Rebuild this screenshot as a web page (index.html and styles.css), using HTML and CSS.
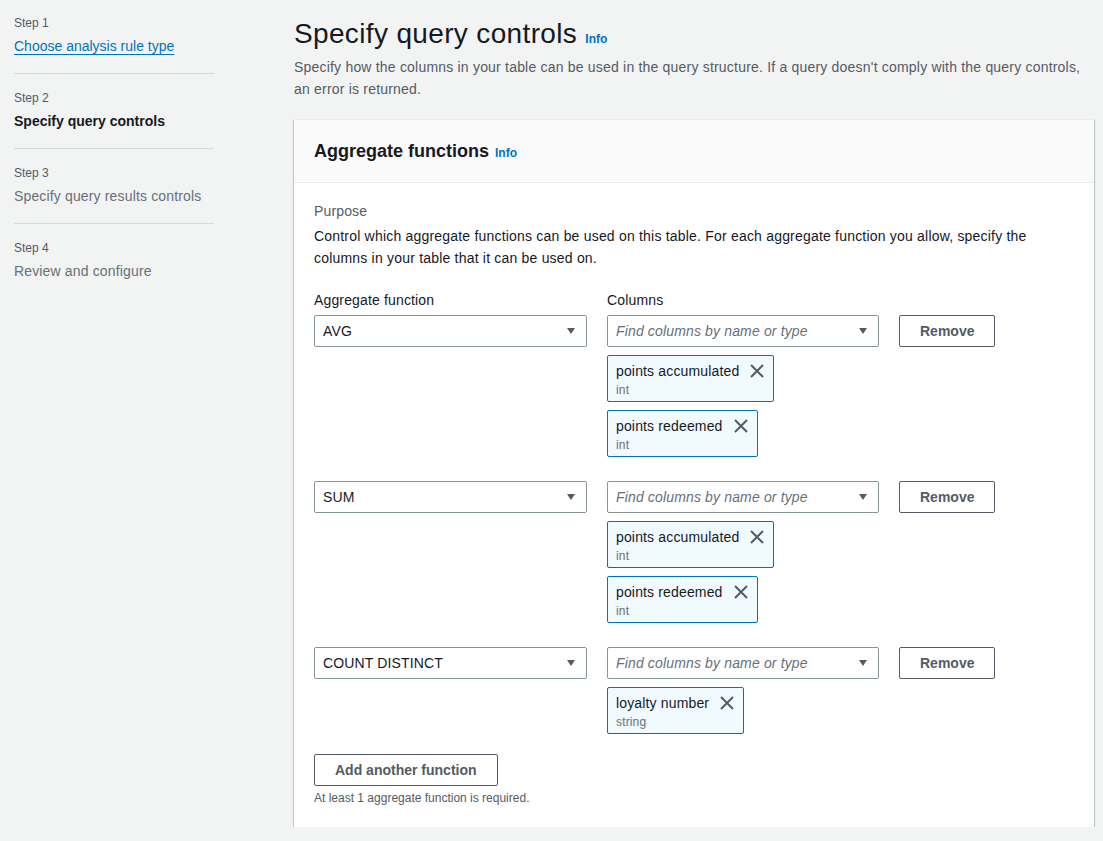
FILE: index.html
```html
<!DOCTYPE html>
<html lang="en">
<head>
<meta charset="utf-8">
<title>Specify query controls</title>
<link rel="stylesheet" href="styles.css">
</head>
<body>
<div class="page">
  <nav class="steps">
    <div class="step step-first">
      <div class="step-label">Step 1</div>
      <a class="step-title step-link" href="#">Choose analysis rule type</a>
    </div>
    <div class="step">
      <div class="step-label">Step 2</div>
      <div class="step-title step-current">Specify query controls</div>
    </div>
    <div class="step">
      <div class="step-label">Step 3</div>
      <div class="step-title step-disabled">Specify query results controls</div>
    </div>
    <div class="step step-last">
      <div class="step-label">Step 4</div>
      <div class="step-title step-disabled">Review and configure</div>
    </div>
  </nav>

  <main class="main">
    <h1 class="page-title">Specify query controls <a class="info" href="#">Info</a></h1>
    <p class="page-desc">Specify how the columns in your table can be used in the query structure. If a query doesn't comply with the query controls, an error is returned.</p>

    <section class="container">
      <header class="container-header">
        <h2 class="container-title">Aggregate functions <a class="info" href="#">Info</a></h2>
      </header>
      <div class="container-body">
        <div class="purpose-label">Purpose</div>
        <p class="purpose-desc">Control which aggregate functions can be used on this table. For each aggregate function you allow, specify the columns in your table that it can be used on.</p>

        <div class="grid labels">
          <div class="field-label">Aggregate function</div>
          <div class="field-label">Columns</div>
        </div>

        <div class="rows">
          <div class="grid row">
            <div class="select">
              <span class="select-value">AVG</span>
              <svg class="caret" viewBox="0 0 16 16" width="16" height="16"><path d="M4 5h8l-4 6z"/></svg>
            </div>
            <div class="col-cell">
              <div class="select">
                <span class="placeholder">Find columns by name or type</span>
                <svg class="caret" viewBox="0 0 16 16" width="16" height="16"><path d="M4 5h8l-4 6z"/></svg>
              </div>
              <div class="token">
                <div class="token-text"><div class="token-name">points accumulated</div><div class="token-tag">int</div></div>
                <svg class="dismiss" viewBox="0 0 16 16" width="16" height="16"><path d="M2 2l12 12M14 2L2 14"/></svg>
              </div>
              <div class="token">
                <div class="token-text"><div class="token-name">points redeemed</div><div class="token-tag">int</div></div>
                <svg class="dismiss" viewBox="0 0 16 16" width="16" height="16"><path d="M2 2l12 12M14 2L2 14"/></svg>
              </div>
            </div>
            <button class="btn">Remove</button>
          </div>

          <div class="grid row">
            <div class="select">
              <span class="select-value">SUM</span>
              <svg class="caret" viewBox="0 0 16 16" width="16" height="16"><path d="M4 5h8l-4 6z"/></svg>
            </div>
            <div class="col-cell">
              <div class="select">
                <span class="placeholder">Find columns by name or type</span>
                <svg class="caret" viewBox="0 0 16 16" width="16" height="16"><path d="M4 5h8l-4 6z"/></svg>
              </div>
              <div class="token">
                <div class="token-text"><div class="token-name">points accumulated</div><div class="token-tag">int</div></div>
                <svg class="dismiss" viewBox="0 0 16 16" width="16" height="16"><path d="M2 2l12 12M14 2L2 14"/></svg>
              </div>
              <div class="token">
                <div class="token-text"><div class="token-name">points redeemed</div><div class="token-tag">int</div></div>
                <svg class="dismiss" viewBox="0 0 16 16" width="16" height="16"><path d="M2 2l12 12M14 2L2 14"/></svg>
              </div>
            </div>
            <button class="btn">Remove</button>
          </div>

          <div class="grid row">
            <div class="select">
              <span class="select-value">COUNT DISTINCT</span>
              <svg class="caret" viewBox="0 0 16 16" width="16" height="16"><path d="M4 5h8l-4 6z"/></svg>
            </div>
            <div class="col-cell">
              <div class="select">
                <span class="placeholder">Find columns by name or type</span>
                <svg class="caret" viewBox="0 0 16 16" width="16" height="16"><path d="M4 5h8l-4 6z"/></svg>
              </div>
              <div class="token">
                <div class="token-text"><div class="token-name">loyalty number</div><div class="token-tag">string</div></div>
                <svg class="dismiss" viewBox="0 0 16 16" width="16" height="16"><path d="M2 2l12 12M14 2L2 14"/></svg>
              </div>
            </div>
            <button class="btn">Remove</button>
          </div>
        </div>

        <button class="btn btn-add">Add another function</button>
        <div class="hint">At least 1 aggregate function is required.</div>
      </div>
    </section>
  </main>
</div>
</body>
</html>
```

FILE: styles.css
```css
* { box-sizing: border-box; }

html, body {
  margin: 0;
  padding: 0;
  background: #f2f3f3;
}

body {
  font-family: "Liberation Sans", Arial, sans-serif;
  font-size: 14px;
  line-height: 22px;
  letter-spacing: 0.15px;
  color: #16191f;
}

.page {
  display: flex;
  padding: 0 9px 0 14px;
}

/* Steps nav */
.steps {
  width: 200px;
  flex: none;
}

.step {
  padding: 16px 0;
  border-bottom: 1px solid #d5dbdb;
  display: flex;
  flex-direction: column;
  align-items: flex-start;
}

.step-first { padding-top: 15px; }
.step-last { border-bottom: none; }

.step-label {
  font-size: 12px;
  line-height: 16px;
  color: #545b64;
  margin-bottom: 4px;
  letter-spacing: 0;
}

.step-title {
  font-size: 14px;
  line-height: 22px;
}

.step-link {
  color: #0073bb;
  text-decoration: underline;
  text-underline-offset: 3px;
  letter-spacing: 0;
}

.step-current {
  font-weight: bold;
  color: #16191f;
  letter-spacing: 0;
}

.step-disabled {
  color: #687078;
}

/* Main */
.main {
  margin-left: 80px;
  width: 800px;
  flex: none;
}

.page-title {
  margin: 16px 0 0;
  font-size: 28px;
  line-height: 36px;
  font-weight: normal;
  letter-spacing: 0.35px;
  color: #16191f;
}

.info {
  font-size: 12px;
  line-height: 16px;
  font-weight: bold;
  letter-spacing: 0;
  color: #0073bb;
  text-decoration: none;
}

.page-desc {
  margin: 4px 0 0;
  color: #545b64;
  line-height: 22px;
  letter-spacing: 0.2px;
}

.container {
  margin-top: 19px;
  background: #fff;
  border-top: 1px solid #eaeded;
  box-shadow: 0 1px 1px 0 rgba(0, 28, 36, 0.3), 1px 1px 1px 0 rgba(0, 28, 36, 0.15), -1px 1px 1px 0 rgba(0, 28, 36, 0.15);
}

.container-header {
  background: #fafafa;
  border-bottom: 1px solid #eaeded;
  padding: 20px 20px;
}

.container-title {
  margin: 0;
  font-size: 18px;
  line-height: 22px;
  font-weight: bold;
  letter-spacing: 0;
  color: #16191f;
}

.container-title .info { margin-left: 1px; }

.container-body {
  padding: 17px 20px 21px;
}

.purpose-label {
  color: #545b64;
  line-height: 22px;
}

.purpose-desc {
  margin: 3px 0 0;
  color: #16191f;
  letter-spacing: 0.2px;
}

.grid {
  display: grid;
  grid-template-columns: 273px 272px auto;
  column-gap: 20px;
}

.labels {
  margin-top: 20px;
  margin-bottom: 4px;
}

.field-label {
  line-height: 22px;
  color: #16191f;
}

.rows {
  display: flex;
  flex-direction: column;
  gap: 24px;
}

.row { align-items: start; }

.col-cell {
  display: flex;
  flex-direction: column;
  align-items: flex-start;
  gap: 8px;
}

.select {
  width: 100%;
  height: 32px;
  border: 1px solid #879596;
  border-radius: 2px;
  background: #fff;
  display: flex;
  align-items: center;
  justify-content: space-between;
  padding: 0 7px 0 8px;
}

.select-value { color: #16191f; }

.placeholder {
  color: #687078;
  font-style: italic;
}

.caret {
  flex: none;
  fill: #545b64;
}

.token {
  display: flex;
  align-items: flex-start;
  background: #f1faff;
  border: 1px solid #0073bb;
  border-radius: 2px;
  padding: 4px 8px 3px;
}

.token-name {
  line-height: 22px;
  color: #16191f;
}

.token-tag {
  font-size: 12px;
  line-height: 16px;
  color: #687078;
}

.dismiss {
  flex: none;
  margin-left: 10px;
  margin-top: 3px;
  fill: none;
  stroke: #545b64;
  stroke-width: 2;
}

.btn {
  justify-self: start;
  height: 32px;
  padding: 0 20px;
  border: 1px solid #545b64;
  border-radius: 2px;
  background: #fff;
  color: #545b64;
  font-family: inherit;
  font-size: 14px;
  font-weight: bold;
  line-height: 22px;
  letter-spacing: 0;
  cursor: pointer;
}

.btn-add {
  display: block;
  margin-top: 20px;
}

.hint {
  margin-top: 4px;
  font-size: 12px;
  line-height: 16px;
  letter-spacing: 0;
  color: #545b64;
}
```
